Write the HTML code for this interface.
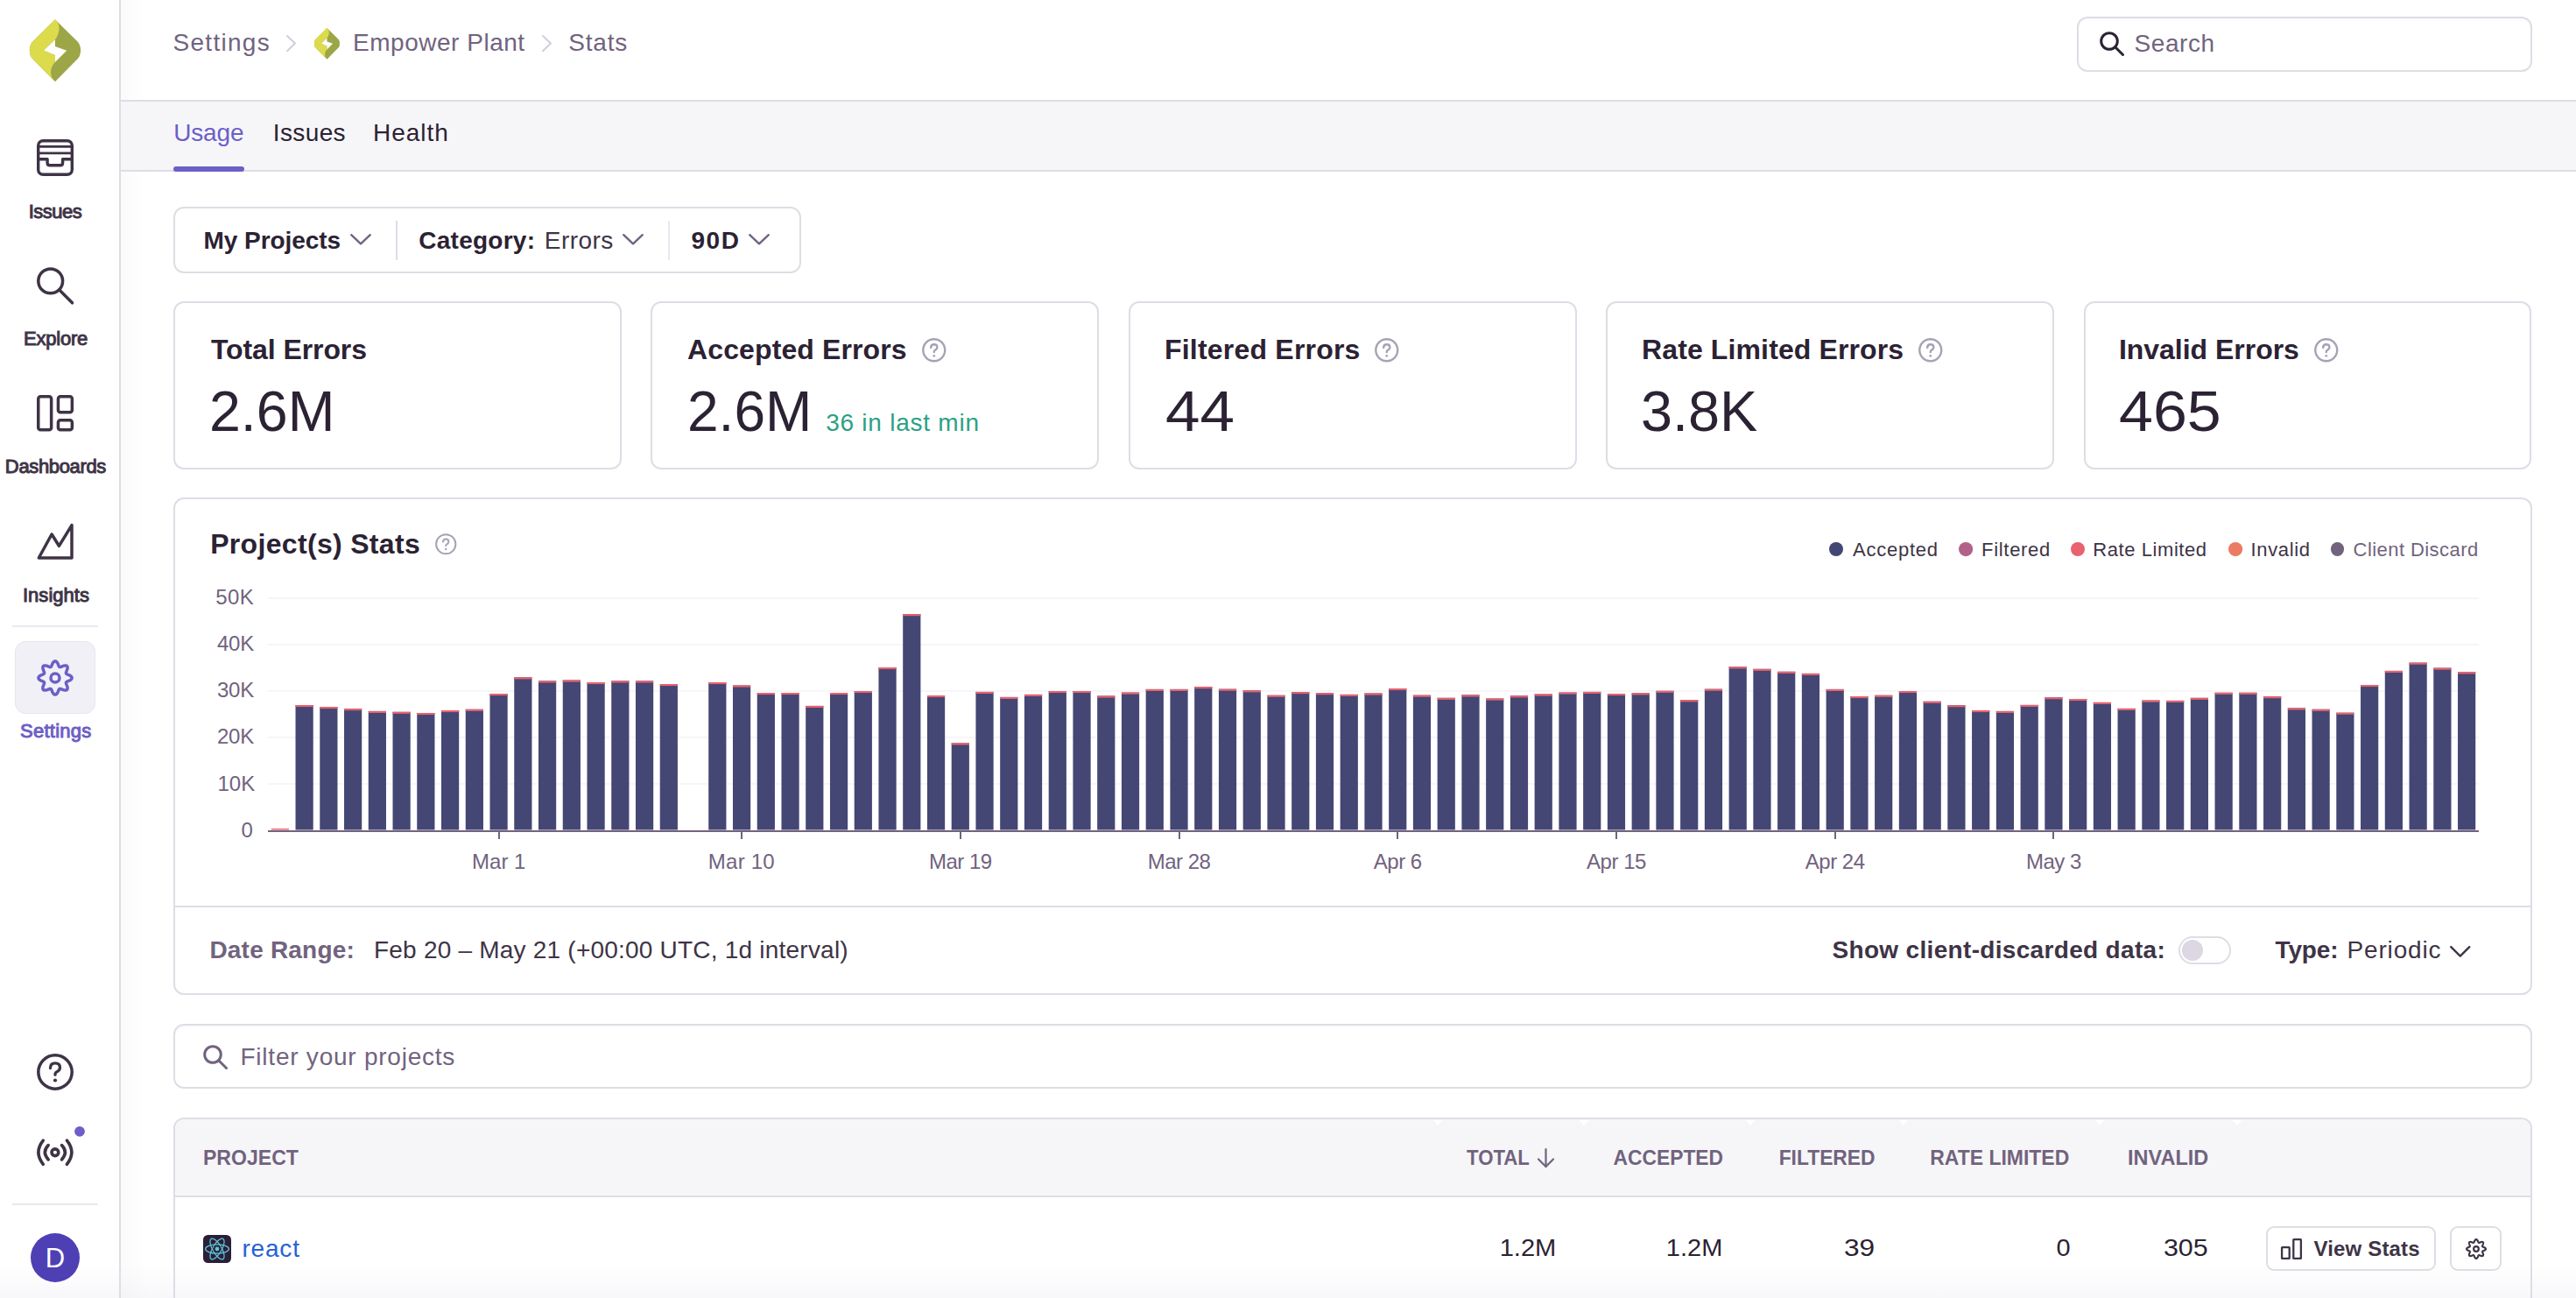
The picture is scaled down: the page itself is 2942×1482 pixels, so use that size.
<!DOCTYPE html><html><head><meta charset="utf-8"><style>
html,body{margin:0;padding:0;}
body{width:2942px;height:1482px;overflow:hidden;position:relative;background:#fff;font-family:"Liberation Sans", sans-serif;}
.t{position:absolute;white-space:nowrap;font-family:"Liberation Sans", sans-serif;}
svg{overflow:visible}
</style></head><body>
<div style="position:absolute;left:0.0px;top:1443.0px;width:2942.0px;height:39.0px;box-sizing:border-box;background:linear-gradient(to bottom, rgba(246,245,248,0), rgba(243,242,246,0.6))"></div>
<div style="position:absolute;left:136.0px;top:0.0px;width:2.0px;height:1482.0px;box-sizing:border-box;background:#e0dce5"></div>
<div style="position:absolute;left:138.0px;top:0.0px;width:32.0px;height:1482.0px;box-sizing:border-box;background:linear-gradient(to right, rgba(80,60,110,0.025), rgba(80,60,110,0))"></div>
<svg style="position:absolute;left:28.0px;top:16.0px;" width="70" height="84" viewBox="0 0 1082 1298" fill="none"><path d="M540,95 L140,490 Q90,545 90,640 Q90,735 140,790 L540,1195 L940,790 Q990,735 990,640 Q990,545 940,490 Z" fill="#9ca647"/>
<path d="M540,95 L140,490 Q90,545 90,640 Q90,735 140,790 L540,1195 C440,1110 440,950 540,850 L540,730 L340,640 L540,450 C635,330 635,170 540,95 Z" fill="#dcdb4c"/>
<path d="M540,450 L340,640 L540,725 L540,850 L745,645 L540,570 Z" fill="#fff"/></svg>
<svg style="position:absolute;left:42.0px;top:159.0px;" width="42" height="42" viewBox="0 0 42 42" fill="none"><g stroke="#3e3446" stroke-width="3.4" stroke-linecap="round" stroke-linejoin="round">
<rect x="1.7" y="1.7" width="38.6" height="38.6" rx="5.5"/>
<path d="M1.7,8.4 H40.3" stroke-width="2.6"/><path d="M1.7,15.9 H40.3" stroke-width="2.9"/>
<path d="M1.7,22.7 H12.1 V27 Q12.1,29.8 15,29.8 H26.8 Q29.6,29.8 29.6,27 V22.7 H40.3"/></g></svg>
<svg style="position:absolute;left:42.0px;top:305.0px;" width="42" height="42" viewBox="0 0 42 42" fill="none"><g stroke="#3e3446" stroke-width="3.5" stroke-linecap="round"><circle cx="15.7" cy="15.9" r="13.9"/><path d="M26.5,26.8 L40.5,40.8"/></g></svg>
<svg style="position:absolute;left:42.0px;top:451.0px;" width="42" height="42" viewBox="0 0 42 42" fill="none"><g stroke="#3e3446" stroke-width="3.5" stroke-linejoin="round">
<rect x="1.75" y="1.75" width="14.9" height="38" rx="2.5"/><rect x="24.45" y="1.75" width="15.9" height="18.1" rx="2.5"/><rect x="24.45" y="28.75" width="15.9" height="11" rx="2.5"/></g></svg>
<svg style="position:absolute;left:42.0px;top:597.0px;" width="42" height="42" viewBox="0 0 42 42" fill="none"><path d="M2.3,40 L17.1,13 L25.4,26.3 L40,2.6 L40,40 Z" stroke="#3e3446" stroke-width="3.5" stroke-linejoin="round" stroke-linecap="round"/></svg>
<div style="position:absolute;left:14.0px;top:714.0px;width:98.0px;height:2.0px;box-sizing:border-box;background:#ebe7ef"></div>
<div style="position:absolute;left:17.0px;top:732.0px;width:92.0px;height:83.0px;box-sizing:border-box;background:#f1f0f7;border:1.5px solid #e8e5ee;border-radius:12px"></div>
<svg style="position:absolute;left:42.0px;top:753.0px;" width="42" height="42" viewBox="0 0 42 42" fill="none"><g stroke="#6c5fc7" stroke-width="3.5" stroke-linejoin="round"><path d="M21.00,1.90 L21.74,2.05 L22.46,2.49 L23.11,3.18 L23.69,4.05 L24.18,5.01 L24.60,5.99 L24.98,6.90 L25.34,7.65 L25.72,8.21 L26.17,8.53 L26.71,8.62 L27.37,8.49 L28.16,8.21 L29.06,7.84 L30.06,7.45 L31.09,7.11 L32.11,6.91 L33.06,6.88 L33.87,7.08 L34.51,7.49 L34.92,8.13 L35.12,8.94 L35.09,9.89 L34.89,10.91 L34.55,11.94 L34.16,12.94 L33.79,13.84 L33.51,14.63 L33.38,15.29 L33.47,15.83 L33.79,16.28 L34.35,16.66 L35.10,17.02 L36.01,17.40 L36.99,17.82 L37.95,18.31 L38.82,18.89 L39.51,19.54 L39.95,20.26 L40.10,21.00 L39.95,21.74 L39.51,22.46 L38.82,23.11 L37.95,23.69 L36.99,24.18 L36.01,24.60 L35.10,24.98 L34.35,25.34 L33.79,25.72 L33.47,26.17 L33.38,26.71 L33.51,27.37 L33.79,28.16 L34.16,29.06 L34.55,30.06 L34.89,31.09 L35.09,32.11 L35.12,33.06 L34.92,33.87 L34.51,34.51 L33.87,34.92 L33.06,35.12 L32.11,35.09 L31.09,34.89 L30.06,34.55 L29.06,34.16 L28.16,33.79 L27.37,33.51 L26.71,33.38 L26.17,33.47 L25.72,33.79 L25.34,34.35 L24.98,35.10 L24.60,36.01 L24.18,36.99 L23.69,37.95 L23.11,38.82 L22.46,39.51 L21.74,39.95 L21.00,40.10 L20.26,39.95 L19.54,39.51 L18.89,38.82 L18.31,37.95 L17.82,36.99 L17.40,36.01 L17.02,35.10 L16.66,34.35 L16.28,33.79 L15.83,33.47 L15.29,33.38 L14.63,33.51 L13.84,33.79 L12.94,34.16 L11.94,34.55 L10.91,34.89 L9.89,35.09 L8.94,35.12 L8.13,34.92 L7.49,34.51 L7.08,33.87 L6.88,33.06 L6.91,32.11 L7.11,31.09 L7.45,30.06 L7.84,29.06 L8.21,28.16 L8.49,27.37 L8.62,26.71 L8.53,26.17 L8.21,25.72 L7.65,25.34 L6.90,24.98 L5.99,24.60 L5.01,24.18 L4.05,23.69 L3.18,23.11 L2.49,22.46 L2.05,21.74 L1.90,21.00 L2.05,20.26 L2.49,19.54 L3.18,18.89 L4.05,18.31 L5.01,17.82 L5.99,17.40 L6.90,17.02 L7.65,16.66 L8.21,16.28 L8.53,15.83 L8.62,15.29 L8.49,14.63 L8.21,13.84 L7.84,12.94 L7.45,11.94 L7.11,10.91 L6.91,9.89 L6.88,8.94 L7.08,8.13 L7.49,7.49 L8.13,7.08 L8.94,6.88 L9.89,6.91 L10.91,7.11 L11.94,7.45 L12.94,7.84 L13.84,8.21 L14.63,8.49 L15.29,8.62 L15.83,8.53 L16.28,8.21 L16.66,7.65 L17.02,6.90 L17.40,5.99 L17.82,5.01 L18.31,4.05 L18.89,3.18 L19.54,2.49 L20.26,2.05 Z"/><circle cx="21" cy="21" r="5"/></g></svg>
<div id="t1" class="t" style="left:63.00px;top:230.7px;font-size:22px;line-height:22px;font-weight:400;color:#3e3446;letter-spacing:-0.520px;transform:translateX(-50%) ;transform-origin:center center;-webkit-text-stroke:1px #3e3446;">Issues</div>
<div id="t2" class="t" style="left:63.60px;top:376.0px;font-size:22px;line-height:22px;font-weight:400;color:#3e3446;letter-spacing:-0.217px;transform:translateX(-50%) ;transform-origin:center center;-webkit-text-stroke:1px #3e3446;">Explore</div>
<div id="t3" class="t" style="left:63.40px;top:522.3px;font-size:22px;line-height:22px;font-weight:400;color:#3e3446;letter-spacing:-0.356px;transform:translateX(-50%) ;transform-origin:center center;-webkit-text-stroke:1px #3e3446;">Dashboards</div>
<div id="t4" class="t" style="left:64.00px;top:668.7px;font-size:22px;line-height:22px;font-weight:400;color:#3e3446;letter-spacing:0.029px;transform:translateX(-50%) ;transform-origin:center center;-webkit-text-stroke:1px #3e3446;">Insights</div>
<div id="t5" class="t" style="left:63.80px;top:824.2px;font-size:22px;line-height:22px;font-weight:400;color:#6c5fc7;letter-spacing:0.257px;transform:translateX(-50%) ;transform-origin:center center;-webkit-text-stroke:1px #6c5fc7;">Settings</div>
<svg style="position:absolute;left:42.0px;top:1203.0px;" width="42" height="42" viewBox="0 0 42 42" fill="none"><g stroke="#3e3446" stroke-width="3.5" stroke-linecap="round"><circle cx="21" cy="21" r="19.2"/>
<path d="M15.5,16.5 Q15.5,10.8 21,10.8 Q26.5,10.8 26.5,15.8 Q26.5,19.5 22.5,21 Q21,21.6 21,24.2" stroke-width="3.3" fill="none"/></g><circle cx="21" cy="30.5" r="2.1" fill="#3e3446"/></svg>
<svg style="position:absolute;left:36.0px;top:1280.0px;" width="64" height="64" viewBox="0 0 64 64" fill="none"><g stroke="#3e3446" stroke-width="3.6" stroke-linecap="round" fill="none">
<circle cx="26.9" cy="35.75" r="3.9"/>
<path d="M19.2,27.6 Q11.5,35.75 19.2,43.9"/><path d="M34.5,27.6 Q42.2,35.75 34.5,43.9"/>
<path d="M13.3,22.2 Q2.5,35.75 13.3,49.3"/><path d="M40.4,22.2 Q51.3,35.75 40.4,49.3"/></g>
<circle cx="55" cy="11.8" r="5.9" fill="#6c5fc7"/></svg>
<div style="position:absolute;left:14.0px;top:1374.0px;width:98.0px;height:2.0px;box-sizing:border-box;background:#ebe7ef"></div>
<div style="position:absolute;left:35.0px;top:1408.0px;width:56.0px;height:56.0px;box-sizing:border-box;background:#4e3fb4;border-radius:50%"></div>
<div id="t6" class="t" style="left:63.00px;top:1421.3px;font-size:31px;line-height:31px;font-weight:400;color:#fff;letter-spacing:0.000px;transform:translateX(-50%) ;transform-origin:center center;">D</div>
<div id="t7" class="t" style="left:197.50px;top:35.4px;font-size:28px;line-height:28px;font-weight:400;color:#71637e;letter-spacing:1.286px;">Settings</div>
<svg style="position:absolute;left:326.7px;top:40.4px;" width="11" height="19.2" viewBox="0 0 11 19.2" fill="none"><path d="M1,1 L10,9.6 L1,18.2" stroke="#d3cedb" stroke-width="2" stroke-linecap="round" stroke-linejoin="round"/></svg>
<svg style="position:absolute;left:356.4px;top:28.5px;" width="35" height="42" viewBox="0 0 1082 1298" fill="none"><path d="M540,95 L140,490 Q90,545 90,640 Q90,735 140,790 L540,1195 L940,790 Q990,735 990,640 Q990,545 940,490 Z" fill="#9ca647"/>
<path d="M540,95 L140,490 Q90,545 90,640 Q90,735 140,790 L540,1195 C440,1110 440,950 540,850 L540,730 L340,640 L540,450 C635,330 635,170 540,95 Z" fill="#dcdb4c"/>
<path d="M540,450 L340,640 L540,725 L540,850 L745,645 L540,570 Z" fill="#fff"/></svg>
<div id="t8" class="t" style="left:403.00px;top:35.4px;font-size:28px;line-height:28px;font-weight:400;color:#71637e;letter-spacing:0.523px;">Empower Plant</div>
<svg style="position:absolute;left:619.0px;top:40.4px;" width="11" height="19.2" viewBox="0 0 11 19.2" fill="none"><path d="M1,1 L10,9.6 L1,18.2" stroke="#d3cedb" stroke-width="2" stroke-linecap="round" stroke-linejoin="round"/></svg>
<div id="t9" class="t" style="left:649.20px;top:35.4px;font-size:28px;line-height:28px;font-weight:400;color:#71637e;letter-spacing:0.820px;">Stats</div>
<div style="position:absolute;left:2372.0px;top:19.0px;width:519.5px;height:62.5px;box-sizing:border-box;border:2px solid #e0dce5;border-radius:12px;box-shadow:inset 0 2px 2px rgba(0,0,0,0.02)"></div>
<svg style="position:absolute;left:2398.0px;top:36.0px;" width="28" height="28" viewBox="0 0 28 28" fill="none"><g stroke="#2b2233" stroke-width="3" stroke-linecap="round"><circle cx="11" cy="11" r="9.3"/><path d="M18,18 L26.5,26.5"/></g></svg>
<div id="t10" class="t" style="left:2437.60px;top:36.3px;font-size:28px;line-height:28px;font-weight:400;color:#71637e;letter-spacing:0.540px;">Search</div>
<div style="position:absolute;left:138.0px;top:114.0px;width:2804.0px;height:82.0px;box-sizing:border-box;background:#f6f6f9;border-top:2px solid #e0dce5;border-bottom:2px solid #e0dce5"></div>
<div id="t11" class="t" style="left:198.20px;top:137.7px;font-size:28px;line-height:28px;font-weight:400;color:#6c5fc7;letter-spacing:-0.150px;">Usage</div>
<div id="t12" class="t" style="left:311.80px;top:137.7px;font-size:28px;line-height:28px;font-weight:400;color:#2b2233;letter-spacing:0.380px;">Issues</div>
<div id="t13" class="t" style="left:426.00px;top:137.7px;font-size:28px;line-height:28px;font-weight:400;color:#2b2233;letter-spacing:1.000px;">Health</div>
<div style="position:absolute;left:198.0px;top:190.0px;width:81.0px;height:6.0px;box-sizing:border-box;background:#6c5fc7;border-radius:3px"></div>
<div style="position:absolute;left:198.0px;top:236.0px;width:717.0px;height:75.5px;box-sizing:border-box;border:2px solid #e0dce5;border-radius:12px"></div>
<div id="t14" class="t" style="left:232.60px;top:260.6px;font-size:28px;line-height:28px;font-weight:700;color:#2b2233;letter-spacing:-0.080px;">My Projects</div>
<svg style="position:absolute;left:400.4px;top:267.4px;" width="24" height="12.5" viewBox="0 0 24 12.5" fill="none"><path d="M1.2,1.2 L12.0,11.3 L22.8,1.2" stroke="#71637e" stroke-width="2.4" stroke-linecap="round" stroke-linejoin="round"/></svg>
<div style="position:absolute;left:452.0px;top:251.6px;width:2.0px;height:45.2px;box-sizing:border-box;background:#e0dce5"></div>
<div id="t15" class="t" style="left:478.25px;top:260.6px;font-size:28px;line-height:28px;font-weight:700;color:#2b2233;letter-spacing:0.253px;">Category:</div>
<div id="t16" class="t" style="left:621.80px;top:260.6px;font-size:28px;line-height:28px;font-weight:400;color:#3e3446;letter-spacing:0.460px;">Errors</div>
<svg style="position:absolute;left:711.0px;top:267.4px;" width="24" height="12.5" viewBox="0 0 24 12.5" fill="none"><path d="M1.2,1.2 L12.0,11.3 L22.8,1.2" stroke="#71637e" stroke-width="2.4" stroke-linecap="round" stroke-linejoin="round"/></svg>
<div style="position:absolute;left:763.0px;top:251.6px;width:2.0px;height:45.2px;box-sizing:border-box;background:#ebe7ef"></div>
<div id="t17" class="t" style="left:789.50px;top:260.6px;font-size:28px;line-height:28px;font-weight:700;color:#2b2233;letter-spacing:1.500px;">90D</div>
<svg style="position:absolute;left:854.6px;top:267.4px;" width="24" height="12.5" viewBox="0 0 24 12.5" fill="none"><path d="M1.2,1.2 L12.0,11.3 L22.8,1.2" stroke="#71637e" stroke-width="2.4" stroke-linecap="round" stroke-linejoin="round"/></svg>
<div style="position:absolute;left:198.0px;top:344.0px;width:511.9px;height:192.0px;box-sizing:border-box;border:2px solid #e0dce5;border-radius:12px"></div>
<div id="t18" class="t" style="left:241.00px;top:383.3px;font-size:32px;line-height:32px;font-weight:700;color:#2b2233;letter-spacing:-0.089px;">Total Errors</div>
<div id="t19" class="t" style="left:238.50px;top:438.4px;font-size:64px;line-height:64px;font-weight:400;color:#2b2233;letter-spacing:0.000px;transform:scaleX(1.0074);transform-origin:left center;">2.6M</div>
<div style="position:absolute;left:743.4px;top:344.0px;width:511.9px;height:192.0px;box-sizing:border-box;border:2px solid #e0dce5;border-radius:12px"></div>
<div id="t20" class="t" style="left:785.00px;top:383.3px;font-size:32px;line-height:32px;font-weight:700;color:#2b2233;letter-spacing:0.117px;">Accepted Errors</div>
<div id="t21" class="t" style="left:784.70px;top:438.4px;font-size:64px;line-height:64px;font-weight:400;color:#2b2233;letter-spacing:0.000px;transform:scaleX(1.0001);transform-origin:left center;">2.6M</div>
<svg style="position:absolute;left:1053.2px;top:386.1px;" width="27.5" height="27.5" viewBox="0 0 26 26" fill="none"><circle cx="13" cy="13" r="11.8" stroke="#a7a2b5" stroke-width="2.27"/>
<path d="M9.6,10.3 Q9.6,6.8 13,6.8 Q16.4,6.8 16.4,9.8 Q16.4,12.1 14,13.1 Q13,13.5 13,15.2" stroke="#a7a2b5" stroke-width="2.27" stroke-linecap="round"/><circle cx="13" cy="19.2" r="1.3" fill="#a7a2b5"/></svg>
<div style="position:absolute;left:1288.8px;top:344.0px;width:511.9px;height:192.0px;box-sizing:border-box;border:2px solid #e0dce5;border-radius:12px"></div>
<div id="t22" class="t" style="left:1330.00px;top:383.3px;font-size:32px;line-height:32px;font-weight:700;color:#2b2233;letter-spacing:0.207px;">Filtered Errors</div>
<div id="t23" class="t" style="left:1330.90px;top:438.4px;font-size:64px;line-height:64px;font-weight:400;color:#2b2233;letter-spacing:0.000px;transform:scaleX(1.1090);transform-origin:left center;">44</div>
<svg style="position:absolute;left:1570.2px;top:386.1px;" width="27.5" height="27.5" viewBox="0 0 26 26" fill="none"><circle cx="13" cy="13" r="11.8" stroke="#a7a2b5" stroke-width="2.27"/>
<path d="M9.6,10.3 Q9.6,6.8 13,6.8 Q16.4,6.8 16.4,9.8 Q16.4,12.1 14,13.1 Q13,13.5 13,15.2" stroke="#a7a2b5" stroke-width="2.27" stroke-linecap="round"/><circle cx="13" cy="19.2" r="1.3" fill="#a7a2b5"/></svg>
<div style="position:absolute;left:1834.2px;top:344.0px;width:511.9px;height:192.0px;box-sizing:border-box;border:2px solid #e0dce5;border-radius:12px"></div>
<div id="t24" class="t" style="left:1875.00px;top:383.3px;font-size:32px;line-height:32px;font-weight:700;color:#2b2233;letter-spacing:0.122px;">Rate Limited Errors</div>
<div id="t25" class="t" style="left:1874.30px;top:438.4px;font-size:64px;line-height:64px;font-weight:400;color:#2b2233;letter-spacing:0.000px;transform:scaleX(1.0124);transform-origin:left center;">3.8K</div>
<svg style="position:absolute;left:2191.3px;top:386.1px;" width="27.5" height="27.5" viewBox="0 0 26 26" fill="none"><circle cx="13" cy="13" r="11.8" stroke="#a7a2b5" stroke-width="2.27"/>
<path d="M9.6,10.3 Q9.6,6.8 13,6.8 Q16.4,6.8 16.4,9.8 Q16.4,12.1 14,13.1 Q13,13.5 13,15.2" stroke="#a7a2b5" stroke-width="2.27" stroke-linecap="round"/><circle cx="13" cy="19.2" r="1.3" fill="#a7a2b5"/></svg>
<div style="position:absolute;left:2379.6px;top:344.0px;width:511.9px;height:192.0px;box-sizing:border-box;border:2px solid #e0dce5;border-radius:12px"></div>
<div id="t26" class="t" style="left:2419.90px;top:383.3px;font-size:32px;line-height:32px;font-weight:700;color:#2b2233;letter-spacing:-0.023px;">Invalid Errors</div>
<div id="t27" class="t" style="left:2420.40px;top:438.4px;font-size:64px;line-height:64px;font-weight:400;color:#2b2233;letter-spacing:0.000px;transform:scaleX(1.0932);transform-origin:left center;">465</div>
<svg style="position:absolute;left:2642.8px;top:386.1px;" width="27.5" height="27.5" viewBox="0 0 26 26" fill="none"><circle cx="13" cy="13" r="11.8" stroke="#a7a2b5" stroke-width="2.27"/>
<path d="M9.6,10.3 Q9.6,6.8 13,6.8 Q16.4,6.8 16.4,9.8 Q16.4,12.1 14,13.1 Q13,13.5 13,15.2" stroke="#a7a2b5" stroke-width="2.27" stroke-linecap="round"/><circle cx="13" cy="19.2" r="1.3" fill="#a7a2b5"/></svg>
<div id="t28" class="t" style="left:943.20px;top:468.9px;font-size:28px;line-height:28px;font-weight:400;color:#2ba185;letter-spacing:0.754px;">36 in last min</div>
<div style="position:absolute;left:198.0px;top:568.0px;width:2693.5px;height:567.5px;box-sizing:border-box;border:2px solid #e0dce5;border-radius:12px"></div>
<div style="position:absolute;left:200.0px;top:1034.0px;width:2689.5px;height:2.0px;box-sizing:border-box;background:#e0dce5"></div>
<div id="t29" class="t" style="left:240.20px;top:604.5px;font-size:32px;line-height:32px;font-weight:700;color:#2b2233;letter-spacing:0.320px;">Project(s) Stats</div>
<svg style="position:absolute;left:496.8px;top:608.8px;" width="24.5" height="24.5" viewBox="0 0 26 26" fill="none"><circle cx="13" cy="13" r="11.8" stroke="#a7a2b5" stroke-width="2.12"/>
<path d="M9.6,10.3 Q9.6,6.8 13,6.8 Q16.4,6.8 16.4,9.8 Q16.4,12.1 14,13.1 Q13,13.5 13,15.2" stroke="#a7a2b5" stroke-width="2.12" stroke-linecap="round"/><circle cx="13" cy="19.2" r="1.3" fill="#a7a2b5"/></svg>
<div style="position:absolute;left:2089.1px;top:619.1px;width:15.8px;height:15.8px;box-sizing:border-box;background:#444674;border-radius:50%"></div>
<div id="t30" class="t" style="left:2116.10px;top:617.0px;font-size:22px;line-height:22px;font-weight:400;color:#3e3446;letter-spacing:0.750px;">Accepted</div>
<svg style="position:absolute;left:2236.9px;top:618.9px;" width="16.2" height="16.2" viewBox="0 0 16.2 16.2" fill="none"><defs><pattern id="pFiltered" width="2" height="2" patternUnits="userSpaceOnUse"><rect width="2" height="2" fill="#d66b8f"/><rect x="0.5" y="0.5" width="1" height="1" fill="#444674"/></pattern></defs><circle cx="8.1" cy="8.1" r="8.1" fill="url(#pFiltered)"/></svg>
<div id="t31" class="t" style="left:2263.00px;top:617.0px;font-size:22px;line-height:22px;font-weight:400;color:#3e3446;letter-spacing:0.700px;">Filtered</div>
<div style="position:absolute;left:2364.9px;top:619.1px;width:15.8px;height:15.8px;box-sizing:border-box;background:#e9626e;border-radius:50%"></div>
<div id="t32" class="t" style="left:2390.30px;top:617.0px;font-size:22px;line-height:22px;font-weight:400;color:#3e3446;letter-spacing:0.573px;">Rate Limited</div>
<svg style="position:absolute;left:2544.8px;top:618.9px;" width="16.2" height="16.2" viewBox="0 0 16.2 16.2" fill="none"><defs><pattern id="pInvalid" width="2" height="2" patternUnits="userSpaceOnUse"><rect width="2" height="2" fill="#ec5b6b"/><rect x="0.5" y="0.5" width="1" height="1" fill="#e3df4c"/></pattern></defs><circle cx="8.1" cy="8.1" r="8.1" fill="url(#pInvalid)"/></svg>
<div id="t33" class="t" style="left:2570.50px;top:617.0px;font-size:22px;line-height:22px;font-weight:400;color:#3e3446;letter-spacing:0.667px;">Invalid</div>
<div style="position:absolute;left:2661.5px;top:619.1px;width:15.8px;height:15.8px;box-sizing:border-box;background:#71637e;border-radius:50%"></div>
<div id="t34" class="t" style="left:2687.60px;top:617.0px;font-size:22px;line-height:22px;font-weight:400;color:#71637e;letter-spacing:0.432px;">Client Discard</div>
<div id="t35" class="t" style="right:2652.20px;top:935.7px;font-size:24px;line-height:24px;font-weight:400;color:#71637e;letter-spacing:1.000px;">0</div>
<div style="position:absolute;left:306.0px;top:894.4px;width:2525.0px;height:2.0px;box-sizing:border-box;background:#f6f5f8"></div>
<div id="t36" class="t" style="right:2650.60px;top:882.5px;font-size:24px;line-height:24px;font-weight:400;color:#71637e;letter-spacing:0.100px;">10K</div>
<div style="position:absolute;left:306.0px;top:841.3px;width:2525.0px;height:2.0px;box-sizing:border-box;background:#f6f5f8"></div>
<div id="t37" class="t" style="right:2652.00px;top:829.1px;font-size:24px;line-height:24px;font-weight:400;color:#71637e;letter-spacing:-0.200px;">20K</div>
<div style="position:absolute;left:306.0px;top:788.1px;width:2525.0px;height:2.0px;box-sizing:border-box;background:#f6f5f8"></div>
<div id="t38" class="t" style="right:2652.00px;top:775.9px;font-size:24px;line-height:24px;font-weight:400;color:#71637e;letter-spacing:-0.200px;">30K</div>
<div style="position:absolute;left:306.0px;top:735.0px;width:2525.0px;height:2.0px;box-sizing:border-box;background:#f6f5f8"></div>
<div id="t39" class="t" style="right:2652.00px;top:722.6px;font-size:24px;line-height:24px;font-weight:400;color:#71637e;letter-spacing:-0.200px;">40K</div>
<div style="position:absolute;left:306.0px;top:681.9px;width:2525.0px;height:2.0px;box-sizing:border-box;background:#f6f5f8"></div>
<div id="t40" class="t" style="right:2651.80px;top:669.6px;font-size:24px;line-height:24px;font-weight:400;color:#71637e;letter-spacing:0.400px;">50K</div>
<svg style="position:absolute;left:0;top:0" width="2942" height="1482" viewBox="0 0 2942 1482"><rect x="309.77" y="946.00" width="20.2" height="1.50" fill="#e9626e"/><rect x="337.52" y="805.00" width="20.2" height="142.50" fill="#444674"/><rect x="337.52" y="805.00" width="20.2" height="2.1" fill="#e9626e"/><rect x="365.27" y="807.00" width="20.2" height="140.50" fill="#444674"/><rect x="365.27" y="807.00" width="20.2" height="2.1" fill="#e9626e"/><rect x="393.02" y="809.10" width="20.2" height="138.40" fill="#444674"/><rect x="393.02" y="809.10" width="20.2" height="2.1" fill="#e9626e"/><rect x="420.76" y="811.90" width="20.2" height="135.60" fill="#444674"/><rect x="420.76" y="811.90" width="20.2" height="2.1" fill="#e9626e"/><rect x="448.51" y="812.80" width="20.2" height="134.70" fill="#444674"/><rect x="448.51" y="812.80" width="20.2" height="2.1" fill="#e9626e"/><rect x="476.26" y="814.00" width="20.2" height="133.50" fill="#444674"/><rect x="476.26" y="814.00" width="20.2" height="2.1" fill="#e9626e"/><rect x="504.00" y="811.00" width="20.2" height="136.50" fill="#444674"/><rect x="504.00" y="811.00" width="20.2" height="2.1" fill="#e9626e"/><rect x="531.75" y="809.80" width="20.2" height="137.70" fill="#444674"/><rect x="531.75" y="809.80" width="20.2" height="2.1" fill="#e9626e"/><rect x="559.50" y="792.00" width="20.2" height="155.50" fill="#444674"/><rect x="559.50" y="792.00" width="20.2" height="2.1" fill="#e9626e"/><rect x="587.25" y="773.30" width="20.2" height="174.20" fill="#444674"/><rect x="587.25" y="773.30" width="20.2" height="2.1" fill="#e9626e"/><rect x="614.99" y="777.40" width="20.2" height="170.10" fill="#444674"/><rect x="614.99" y="777.40" width="20.2" height="2.1" fill="#e9626e"/><rect x="642.74" y="776.50" width="20.2" height="171.00" fill="#444674"/><rect x="642.74" y="776.50" width="20.2" height="2.1" fill="#e9626e"/><rect x="670.49" y="779.00" width="20.2" height="168.50" fill="#444674"/><rect x="670.49" y="779.00" width="20.2" height="2.1" fill="#e9626e"/><rect x="698.24" y="777.40" width="20.2" height="170.10" fill="#444674"/><rect x="698.24" y="777.40" width="20.2" height="2.1" fill="#e9626e"/><rect x="725.98" y="777.40" width="20.2" height="170.10" fill="#444674"/><rect x="725.98" y="777.40" width="20.2" height="2.1" fill="#e9626e"/><rect x="753.73" y="781.00" width="20.2" height="166.50" fill="#444674"/><rect x="753.73" y="781.00" width="20.2" height="2.1" fill="#e9626e"/><rect x="809.22" y="779.00" width="20.2" height="168.50" fill="#444674"/><rect x="809.22" y="779.00" width="20.2" height="2.1" fill="#e9626e"/><rect x="836.97" y="782.50" width="20.2" height="165.00" fill="#444674"/><rect x="836.97" y="782.50" width="20.2" height="2.1" fill="#e9626e"/><rect x="864.72" y="791.00" width="20.2" height="156.50" fill="#444674"/><rect x="864.72" y="791.00" width="20.2" height="2.1" fill="#e9626e"/><rect x="892.47" y="791.00" width="20.2" height="156.50" fill="#444674"/><rect x="892.47" y="791.00" width="20.2" height="2.1" fill="#e9626e"/><rect x="920.21" y="805.90" width="20.2" height="141.60" fill="#444674"/><rect x="920.21" y="805.90" width="20.2" height="2.1" fill="#e9626e"/><rect x="947.96" y="791.00" width="20.2" height="156.50" fill="#444674"/><rect x="947.96" y="791.00" width="20.2" height="2.1" fill="#e9626e"/><rect x="975.71" y="789.00" width="20.2" height="158.50" fill="#444674"/><rect x="975.71" y="789.00" width="20.2" height="2.1" fill="#e9626e"/><rect x="1003.45" y="762.00" width="20.2" height="185.50" fill="#444674"/><rect x="1003.45" y="762.00" width="20.2" height="2.1" fill="#e9626e"/><rect x="1031.20" y="701.10" width="20.2" height="246.40" fill="#444674"/><rect x="1031.20" y="701.10" width="20.2" height="2.1" fill="#e9626e"/><rect x="1058.95" y="794.00" width="20.2" height="153.50" fill="#444674"/><rect x="1058.95" y="794.00" width="20.2" height="2.1" fill="#e9626e"/><rect x="1086.70" y="848.40" width="20.2" height="99.10" fill="#444674"/><rect x="1086.70" y="848.40" width="20.2" height="2.1" fill="#e9626e"/><rect x="1114.44" y="789.90" width="20.2" height="157.60" fill="#444674"/><rect x="1114.44" y="789.90" width="20.2" height="2.1" fill="#e9626e"/><rect x="1142.19" y="795.90" width="20.2" height="151.60" fill="#444674"/><rect x="1142.19" y="795.90" width="20.2" height="2.1" fill="#e9626e"/><rect x="1169.94" y="792.90" width="20.2" height="154.60" fill="#444674"/><rect x="1169.94" y="792.90" width="20.2" height="2.1" fill="#e9626e"/><rect x="1197.69" y="789.00" width="20.2" height="158.50" fill="#444674"/><rect x="1197.69" y="789.00" width="20.2" height="2.1" fill="#e9626e"/><rect x="1225.43" y="789.00" width="20.2" height="158.50" fill="#444674"/><rect x="1225.43" y="789.00" width="20.2" height="2.1" fill="#e9626e"/><rect x="1253.18" y="794.50" width="20.2" height="153.00" fill="#444674"/><rect x="1253.18" y="794.50" width="20.2" height="2.1" fill="#e9626e"/><rect x="1280.93" y="790.60" width="20.2" height="156.90" fill="#444674"/><rect x="1280.93" y="790.60" width="20.2" height="2.1" fill="#e9626e"/><rect x="1308.67" y="786.90" width="20.2" height="160.60" fill="#444674"/><rect x="1308.67" y="786.90" width="20.2" height="2.1" fill="#e9626e"/><rect x="1336.42" y="786.90" width="20.2" height="160.60" fill="#444674"/><rect x="1336.42" y="786.90" width="20.2" height="2.1" fill="#e9626e"/><rect x="1364.17" y="784.10" width="20.2" height="163.40" fill="#444674"/><rect x="1364.17" y="784.10" width="20.2" height="2.1" fill="#e9626e"/><rect x="1391.92" y="786.70" width="20.2" height="160.80" fill="#444674"/><rect x="1391.92" y="786.70" width="20.2" height="2.1" fill="#e9626e"/><rect x="1419.66" y="788.30" width="20.2" height="159.20" fill="#444674"/><rect x="1419.66" y="788.30" width="20.2" height="2.1" fill="#e9626e"/><rect x="1447.41" y="793.80" width="20.2" height="153.70" fill="#444674"/><rect x="1447.41" y="793.80" width="20.2" height="2.1" fill="#e9626e"/><rect x="1475.16" y="790.10" width="20.2" height="157.40" fill="#444674"/><rect x="1475.16" y="790.10" width="20.2" height="2.1" fill="#e9626e"/><rect x="1502.91" y="791.10" width="20.2" height="156.40" fill="#444674"/><rect x="1502.91" y="791.10" width="20.2" height="2.1" fill="#e9626e"/><rect x="1530.65" y="792.90" width="20.2" height="154.60" fill="#444674"/><rect x="1530.65" y="792.90" width="20.2" height="2.1" fill="#e9626e"/><rect x="1558.40" y="791.50" width="20.2" height="156.00" fill="#444674"/><rect x="1558.40" y="791.50" width="20.2" height="2.1" fill="#e9626e"/><rect x="1586.15" y="786.00" width="20.2" height="161.50" fill="#444674"/><rect x="1586.15" y="786.00" width="20.2" height="2.1" fill="#e9626e"/><rect x="1613.89" y="793.70" width="20.2" height="153.80" fill="#444674"/><rect x="1613.89" y="793.70" width="20.2" height="2.1" fill="#e9626e"/><rect x="1641.64" y="796.80" width="20.2" height="150.70" fill="#444674"/><rect x="1641.64" y="796.80" width="20.2" height="2.1" fill="#e9626e"/><rect x="1669.39" y="793.40" width="20.2" height="154.10" fill="#444674"/><rect x="1669.39" y="793.40" width="20.2" height="2.1" fill="#e9626e"/><rect x="1697.14" y="797.50" width="20.2" height="150.00" fill="#444674"/><rect x="1697.14" y="797.50" width="20.2" height="2.1" fill="#e9626e"/><rect x="1724.88" y="794.30" width="20.2" height="153.20" fill="#444674"/><rect x="1724.88" y="794.30" width="20.2" height="2.1" fill="#e9626e"/><rect x="1752.63" y="792.50" width="20.2" height="155.00" fill="#444674"/><rect x="1752.63" y="792.50" width="20.2" height="2.1" fill="#e9626e"/><rect x="1780.38" y="790.60" width="20.2" height="156.90" fill="#444674"/><rect x="1780.38" y="790.60" width="20.2" height="2.1" fill="#e9626e"/><rect x="1808.13" y="789.90" width="20.2" height="157.60" fill="#444674"/><rect x="1808.13" y="789.90" width="20.2" height="2.1" fill="#e9626e"/><rect x="1835.87" y="792.00" width="20.2" height="155.50" fill="#444674"/><rect x="1835.87" y="792.00" width="20.2" height="2.1" fill="#e9626e"/><rect x="1863.62" y="791.30" width="20.2" height="156.20" fill="#444674"/><rect x="1863.62" y="791.30" width="20.2" height="2.1" fill="#e9626e"/><rect x="1891.37" y="788.80" width="20.2" height="158.70" fill="#444674"/><rect x="1891.37" y="788.80" width="20.2" height="2.1" fill="#e9626e"/><rect x="1919.11" y="799.20" width="20.2" height="148.30" fill="#444674"/><rect x="1919.11" y="799.20" width="20.2" height="2.1" fill="#e9626e"/><rect x="1946.86" y="786.70" width="20.2" height="160.80" fill="#444674"/><rect x="1946.86" y="786.70" width="20.2" height="2.1" fill="#e9626e"/><rect x="1974.61" y="761.30" width="20.2" height="186.20" fill="#444674"/><rect x="1974.61" y="761.30" width="20.2" height="2.1" fill="#e9626e"/><rect x="2002.36" y="763.80" width="20.2" height="183.70" fill="#444674"/><rect x="2002.36" y="763.80" width="20.2" height="2.1" fill="#e9626e"/><rect x="2030.10" y="766.80" width="20.2" height="180.70" fill="#444674"/><rect x="2030.10" y="766.80" width="20.2" height="2.1" fill="#e9626e"/><rect x="2057.85" y="768.90" width="20.2" height="178.60" fill="#444674"/><rect x="2057.85" y="768.90" width="20.2" height="2.1" fill="#e9626e"/><rect x="2085.60" y="786.90" width="20.2" height="160.60" fill="#444674"/><rect x="2085.60" y="786.90" width="20.2" height="2.1" fill="#e9626e"/><rect x="2113.35" y="795.00" width="20.2" height="152.50" fill="#444674"/><rect x="2113.35" y="795.00" width="20.2" height="2.1" fill="#e9626e"/><rect x="2141.09" y="793.80" width="20.2" height="153.70" fill="#444674"/><rect x="2141.09" y="793.80" width="20.2" height="2.1" fill="#e9626e"/><rect x="2168.84" y="789.00" width="20.2" height="158.50" fill="#444674"/><rect x="2168.84" y="789.00" width="20.2" height="2.1" fill="#e9626e"/><rect x="2196.59" y="800.80" width="20.2" height="146.70" fill="#444674"/><rect x="2196.59" y="800.80" width="20.2" height="2.1" fill="#e9626e"/><rect x="2224.33" y="805.20" width="20.2" height="142.30" fill="#444674"/><rect x="2224.33" y="805.20" width="20.2" height="2.1" fill="#e9626e"/><rect x="2252.08" y="811.00" width="20.2" height="136.50" fill="#444674"/><rect x="2252.08" y="811.00" width="20.2" height="2.1" fill="#e9626e"/><rect x="2279.83" y="811.90" width="20.2" height="135.60" fill="#444674"/><rect x="2279.83" y="811.90" width="20.2" height="2.1" fill="#e9626e"/><rect x="2307.58" y="804.90" width="20.2" height="142.60" fill="#444674"/><rect x="2307.58" y="804.90" width="20.2" height="2.1" fill="#e9626e"/><rect x="2335.32" y="796.20" width="20.2" height="151.30" fill="#444674"/><rect x="2335.32" y="796.20" width="20.2" height="2.1" fill="#e9626e"/><rect x="2363.07" y="798.00" width="20.2" height="149.50" fill="#444674"/><rect x="2363.07" y="798.00" width="20.2" height="2.1" fill="#e9626e"/><rect x="2390.82" y="801.90" width="20.2" height="145.60" fill="#444674"/><rect x="2390.82" y="801.90" width="20.2" height="2.1" fill="#e9626e"/><rect x="2418.56" y="808.90" width="20.2" height="138.60" fill="#444674"/><rect x="2418.56" y="808.90" width="20.2" height="2.1" fill="#e9626e"/><rect x="2446.31" y="799.60" width="20.2" height="147.90" fill="#444674"/><rect x="2446.31" y="799.60" width="20.2" height="2.1" fill="#e9626e"/><rect x="2474.06" y="799.90" width="20.2" height="147.60" fill="#444674"/><rect x="2474.06" y="799.90" width="20.2" height="2.1" fill="#e9626e"/><rect x="2501.81" y="796.80" width="20.2" height="150.70" fill="#444674"/><rect x="2501.81" y="796.80" width="20.2" height="2.1" fill="#e9626e"/><rect x="2529.55" y="790.80" width="20.2" height="156.70" fill="#444674"/><rect x="2529.55" y="790.80" width="20.2" height="2.1" fill="#e9626e"/><rect x="2557.30" y="790.80" width="20.2" height="156.70" fill="#444674"/><rect x="2557.30" y="790.80" width="20.2" height="2.1" fill="#e9626e"/><rect x="2585.05" y="795.20" width="20.2" height="152.30" fill="#444674"/><rect x="2585.05" y="795.20" width="20.2" height="2.1" fill="#e9626e"/><rect x="2612.80" y="808.40" width="20.2" height="139.10" fill="#444674"/><rect x="2612.80" y="808.40" width="20.2" height="2.1" fill="#e9626e"/><rect x="2640.54" y="809.80" width="20.2" height="137.70" fill="#444674"/><rect x="2640.54" y="809.80" width="20.2" height="2.1" fill="#e9626e"/><rect x="2668.29" y="813.70" width="20.2" height="133.80" fill="#444674"/><rect x="2668.29" y="813.70" width="20.2" height="2.1" fill="#e9626e"/><rect x="2696.04" y="782.00" width="20.2" height="165.50" fill="#444674"/><rect x="2696.04" y="782.00" width="20.2" height="2.1" fill="#e9626e"/><rect x="2723.78" y="765.90" width="20.2" height="181.60" fill="#444674"/><rect x="2723.78" y="765.90" width="20.2" height="2.1" fill="#e9626e"/><rect x="2751.53" y="756.60" width="20.2" height="190.90" fill="#444674"/><rect x="2751.53" y="756.60" width="20.2" height="2.1" fill="#e9626e"/><rect x="2779.28" y="762.60" width="20.2" height="184.90" fill="#444674"/><rect x="2779.28" y="762.60" width="20.2" height="2.1" fill="#e9626e"/><rect x="2807.03" y="767.30" width="20.2" height="180.20" fill="#444674"/><rect x="2807.03" y="767.30" width="20.2" height="2.1" fill="#e9626e"/></svg>
<div style="position:absolute;left:306.0px;top:947.5px;width:2525.0px;height:2.0px;box-sizing:border-box;background:#71637e"></div>
<div style="position:absolute;left:568.6px;top:949.5px;width:2.0px;height:8.2px;box-sizing:border-box;background:#71637e"></div>
<div id="t41" class="t" style="left:569.80px;top:972.1px;font-size:24px;line-height:24px;font-weight:400;color:#71637e;letter-spacing:0.000px;transform:translateX(-50%) ;transform-origin:center center;">Mar 1</div>
<div style="position:absolute;left:846.1px;top:949.5px;width:2.0px;height:8.2px;box-sizing:border-box;background:#71637e"></div>
<div id="t42" class="t" style="left:846.87px;top:972.1px;font-size:24px;line-height:24px;font-weight:400;color:#71637e;letter-spacing:0.220px;transform:translateX(-50%) ;transform-origin:center center;">Mar 10</div>
<div style="position:absolute;left:1095.8px;top:949.5px;width:2.0px;height:8.2px;box-sizing:border-box;background:#71637e"></div>
<div id="t43" class="t" style="left:1096.80px;top:972.1px;font-size:24px;line-height:24px;font-weight:400;color:#71637e;letter-spacing:-0.500px;transform:translateX(-50%) ;transform-origin:center center;">Mar 19</div>
<div style="position:absolute;left:1345.5px;top:949.5px;width:2.0px;height:8.2px;box-sizing:border-box;background:#71637e"></div>
<div id="t44" class="t" style="left:1346.52px;top:972.1px;font-size:24px;line-height:24px;font-weight:400;color:#71637e;letter-spacing:-0.500px;transform:translateX(-50%) ;transform-origin:center center;">Mar 28</div>
<div style="position:absolute;left:1595.2px;top:949.5px;width:2.0px;height:8.2px;box-sizing:border-box;background:#71637e"></div>
<div id="t45" class="t" style="left:1596.25px;top:972.1px;font-size:24px;line-height:24px;font-weight:400;color:#71637e;letter-spacing:-0.500px;transform:translateX(-50%) ;transform-origin:center center;">Apr 6</div>
<div style="position:absolute;left:1845.0px;top:949.5px;width:2.0px;height:8.2px;box-sizing:border-box;background:#71637e"></div>
<div id="t46" class="t" style="left:1845.97px;top:972.1px;font-size:24px;line-height:24px;font-weight:400;color:#71637e;letter-spacing:-0.500px;transform:translateX(-50%) ;transform-origin:center center;">Apr 15</div>
<div style="position:absolute;left:2094.7px;top:949.5px;width:2.0px;height:8.2px;box-sizing:border-box;background:#71637e"></div>
<div id="t47" class="t" style="left:2095.70px;top:972.1px;font-size:24px;line-height:24px;font-weight:400;color:#71637e;letter-spacing:-0.500px;transform:translateX(-50%) ;transform-origin:center center;">Apr 24</div>
<div style="position:absolute;left:2344.4px;top:949.5px;width:2.0px;height:8.2px;box-sizing:border-box;background:#71637e"></div>
<div id="t48" class="t" style="left:2345.42px;top:972.1px;font-size:24px;line-height:24px;font-weight:400;color:#71637e;letter-spacing:-0.500px;transform:translateX(-50%) ;transform-origin:center center;">May 3</div>
<div id="t49" class="t" style="left:239.40px;top:1071.3px;font-size:28px;line-height:28px;font-weight:700;color:#71637e;letter-spacing:0.210px;">Date Range:</div>
<div id="t50" class="t" style="left:427.00px;top:1071.3px;font-size:28px;line-height:28px;font-weight:400;color:#3e3446;letter-spacing:0.215px;">Feb 20 – May 21 (+00:00 UTC, 1d interval)</div>
<div id="t51" class="t" style="left:2092.50px;top:1070.7px;font-size:28px;line-height:28px;font-weight:700;color:#3e3446;letter-spacing:0.325px;">Show client-discarded data:</div>
<div style="position:absolute;left:2488.0px;top:1069.0px;width:60.0px;height:32.0px;box-sizing:border-box;border:2px solid #e0dce5;border-radius:16px;background:#fff"></div>
<div style="position:absolute;left:2492.0px;top:1073.0px;width:24.0px;height:24.0px;box-sizing:border-box;background:#dcd7e2;border-radius:50%"></div>
<div id="t52" class="t" style="left:2598.50px;top:1070.7px;font-size:28px;line-height:28px;font-weight:700;color:#3e3446;letter-spacing:-0.150px;">Type:</div>
<div id="t53" class="t" style="left:2680.50px;top:1070.7px;font-size:28px;line-height:28px;font-weight:400;color:#3e3446;letter-spacing:0.836px;">Periodic</div>
<svg style="position:absolute;left:2798.0px;top:1079.5px;" width="23.5" height="12.8" viewBox="0 0 23.5 12.8" fill="none"><path d="M1.2,1.2 L11.75,11.600000000000001 L22.3,1.2" stroke="#3e3446" stroke-width="2.4" stroke-linecap="round" stroke-linejoin="round"/></svg>
<div style="position:absolute;left:198.0px;top:1169.0px;width:2693.5px;height:74.0px;box-sizing:border-box;border:2px solid #e0dce5;border-radius:12px;box-shadow:inset 0 2px 3px rgba(0,0,0,0.025)"></div>
<svg style="position:absolute;left:232.0px;top:1192.6px;" width="28" height="28" viewBox="0 0 28 28" fill="none"><g stroke="#71637e" stroke-width="3" stroke-linecap="round"><circle cx="11" cy="11" r="9.3"/><path d="M18,18 L26.5,26.5"/></g></svg>
<div id="t54" class="t" style="left:274.50px;top:1193.1px;font-size:28px;line-height:28px;font-weight:400;color:#71637e;letter-spacing:0.766px;">Filter your projects</div>
<div style="position:absolute;left:198.0px;top:1276.0px;width:2693.5px;height:226.0px;box-sizing:border-box;border:2px solid #e0dce5;border-radius:12px"></div>
<div style="position:absolute;left:200.0px;top:1278.0px;width:2689.5px;height:87.0px;box-sizing:border-box;background:#f6f6f9;border-top-left-radius:10px;border-top-right-radius:10px"></div>
<div style="position:absolute;left:200.0px;top:1365.0px;width:2689.5px;height:2.0px;box-sizing:border-box;background:#e0dce5"></div>
<div id="t55" class="t" style="left:231.90px;top:1309.6px;font-size:24px;line-height:24px;font-weight:700;color:#71637e;letter-spacing:0.000px;transform:scaleX(0.9602);transform-origin:left center;">PROJECT</div>
<div id="t56" class="t" style="left:1674.90px;top:1309.6px;font-size:24px;line-height:24px;font-weight:700;color:#71637e;letter-spacing:0.000px;transform:scaleX(0.9242);transform-origin:left center;">TOTAL</div>
<svg style="position:absolute;left:1755.0px;top:1310.0px;" width="21" height="24" viewBox="0 0 21 24" fill="none"><g stroke="#71637e" stroke-width="2.2" stroke-linecap="round" stroke-linejoin="round" fill="none"><path d="M10.5,2 V22"/><path d="M2,13.5 L10.5,22 L19,13.5"/></g></svg>
<div id="t57" class="t" style="right:974.40px;top:1309.6px;font-size:24px;line-height:24px;font-weight:700;color:#71637e;letter-spacing:0.000px;transform:scaleX(0.9504);transform-origin:right center;">ACCEPTED</div>
<div id="t58" class="t" style="right:800.20px;top:1309.6px;font-size:24px;line-height:24px;font-weight:700;color:#71637e;letter-spacing:0.000px;transform:scaleX(0.9509);transform-origin:right center;">FILTERED</div>
<div id="t59" class="t" style="right:578.30px;top:1309.6px;font-size:24px;line-height:24px;font-weight:700;color:#71637e;letter-spacing:0.000px;transform:scaleX(0.9562);transform-origin:right center;">RATE LIMITED</div>
<div id="t60" class="t" style="right:420.20px;top:1309.6px;font-size:24px;line-height:24px;font-weight:700;color:#71637e;letter-spacing:0.000px;transform:scaleX(0.9784);transform-origin:right center;">INVALID</div>
<svg style="position:absolute;left:1637.0px;top:1279.0px;" width="10" height="6" viewBox="0 0 10 6" fill="none"><path d="M0,0 L10,0 L5,6 Z" fill="#fff"/></svg>
<svg style="position:absolute;left:1804.0px;top:1279.0px;" width="10" height="6" viewBox="0 0 10 6" fill="none"><path d="M0,0 L10,0 L5,6 Z" fill="#fff"/></svg>
<svg style="position:absolute;left:1994.0px;top:1279.0px;" width="10" height="6" viewBox="0 0 10 6" fill="none"><path d="M0,0 L10,0 L5,6 Z" fill="#fff"/></svg>
<svg style="position:absolute;left:2169.0px;top:1279.0px;" width="10" height="6" viewBox="0 0 10 6" fill="none"><path d="M0,0 L10,0 L5,6 Z" fill="#fff"/></svg>
<svg style="position:absolute;left:2393.0px;top:1279.0px;" width="10" height="6" viewBox="0 0 10 6" fill="none"><path d="M0,0 L10,0 L5,6 Z" fill="#fff"/></svg>
<svg style="position:absolute;left:2550.0px;top:1279.0px;" width="10" height="6" viewBox="0 0 10 6" fill="none"><path d="M0,0 L10,0 L5,6 Z" fill="#fff"/></svg>
<svg style="position:absolute;left:232.0px;top:1410.0px;" width="32" height="32" viewBox="0 0 32 32" fill="none"><rect width="32" height="32" rx="5.5" fill="#2b1f38"/>
<g stroke="#5ec6d6" stroke-width="1.25" fill="none"><ellipse cx="16" cy="16" rx="13.4" ry="5.1"/><ellipse cx="16" cy="16" rx="13.4" ry="5.1" transform="rotate(60 16 16)"/><ellipse cx="16" cy="16" rx="13.4" ry="5.1" transform="rotate(120 16 16)"/></g><circle cx="16" cy="16" r="2.4" fill="#5ec6d6"/></svg>
<div id="t61" class="t" style="left:276.50px;top:1412.1px;font-size:28px;line-height:28px;font-weight:400;color:#2562d4;letter-spacing:0.800px;">react</div>
<div id="t62" class="t" style="right:1164.80px;top:1411.4px;font-size:28px;line-height:28px;font-weight:400;color:#2b2233;letter-spacing:0.000px;transform:scaleX(1.0377);transform-origin:right center;">1.2M</div>
<div id="t63" class="t" style="right:974.90px;top:1411.4px;font-size:28px;line-height:28px;font-weight:400;color:#2b2233;letter-spacing:0.000px;transform:scaleX(1.0342);transform-origin:right center;">1.2M</div>
<div id="t64" class="t" style="right:800.60px;top:1411.4px;font-size:28px;line-height:28px;font-weight:400;color:#2b2233;letter-spacing:0.000px;transform:scaleX(1.1288);transform-origin:right center;">39</div>
<div id="t65" class="t" style="right:577.30px;top:1411.4px;font-size:28px;line-height:28px;font-weight:400;color:#2b2233;letter-spacing:0.000px;transform:scaleX(1.0335);transform-origin:right center;">0</div>
<div id="t66" class="t" style="right:420.20px;top:1411.4px;font-size:28px;line-height:28px;font-weight:400;color:#2b2233;letter-spacing:0.000px;transform:scaleX(1.0874);transform-origin:right center;">305</div>
<div style="position:absolute;left:2587.5px;top:1400.2px;width:194.0px;height:51.3px;box-sizing:border-box;border:2px solid #e0dce5;border-radius:9px"></div>
<svg style="position:absolute;left:2605.0px;top:1414.0px;" width="24" height="24" viewBox="0 0 24 24" fill="none"><g stroke="#3e3446" stroke-width="2.3" stroke-linejoin="round" fill="none"><rect x="1.1" y="10.1" width="8.6" height="12.8" rx="0.5"/><rect x="14.3" y="1.1" width="8.6" height="21.8" rx="0.5"/></g></svg>
<div id="t67" class="t" style="left:2642.40px;top:1413.7px;font-size:24px;line-height:24px;font-weight:700;color:#3e3446;letter-spacing:0.178px;">View Stats</div>
<div style="position:absolute;left:2798.3px;top:1400.2px;width:58.7px;height:51.3px;box-sizing:border-box;border:2px solid #e0dce5;border-radius:9px"></div>
<svg style="position:absolute;left:2816.0px;top:1414.0px;" width="24" height="24" viewBox="0 0 42 42" fill="none"><g stroke="#3e3446" stroke-width="3.8" stroke-linejoin="round"><path d="M21.00,1.90 L21.74,2.05 L22.46,2.49 L23.11,3.18 L23.69,4.05 L24.18,5.01 L24.60,5.99 L24.98,6.90 L25.34,7.65 L25.72,8.21 L26.17,8.53 L26.71,8.62 L27.37,8.49 L28.16,8.21 L29.06,7.84 L30.06,7.45 L31.09,7.11 L32.11,6.91 L33.06,6.88 L33.87,7.08 L34.51,7.49 L34.92,8.13 L35.12,8.94 L35.09,9.89 L34.89,10.91 L34.55,11.94 L34.16,12.94 L33.79,13.84 L33.51,14.63 L33.38,15.29 L33.47,15.83 L33.79,16.28 L34.35,16.66 L35.10,17.02 L36.01,17.40 L36.99,17.82 L37.95,18.31 L38.82,18.89 L39.51,19.54 L39.95,20.26 L40.10,21.00 L39.95,21.74 L39.51,22.46 L38.82,23.11 L37.95,23.69 L36.99,24.18 L36.01,24.60 L35.10,24.98 L34.35,25.34 L33.79,25.72 L33.47,26.17 L33.38,26.71 L33.51,27.37 L33.79,28.16 L34.16,29.06 L34.55,30.06 L34.89,31.09 L35.09,32.11 L35.12,33.06 L34.92,33.87 L34.51,34.51 L33.87,34.92 L33.06,35.12 L32.11,35.09 L31.09,34.89 L30.06,34.55 L29.06,34.16 L28.16,33.79 L27.37,33.51 L26.71,33.38 L26.17,33.47 L25.72,33.79 L25.34,34.35 L24.98,35.10 L24.60,36.01 L24.18,36.99 L23.69,37.95 L23.11,38.82 L22.46,39.51 L21.74,39.95 L21.00,40.10 L20.26,39.95 L19.54,39.51 L18.89,38.82 L18.31,37.95 L17.82,36.99 L17.40,36.01 L17.02,35.10 L16.66,34.35 L16.28,33.79 L15.83,33.47 L15.29,33.38 L14.63,33.51 L13.84,33.79 L12.94,34.16 L11.94,34.55 L10.91,34.89 L9.89,35.09 L8.94,35.12 L8.13,34.92 L7.49,34.51 L7.08,33.87 L6.88,33.06 L6.91,32.11 L7.11,31.09 L7.45,30.06 L7.84,29.06 L8.21,28.16 L8.49,27.37 L8.62,26.71 L8.53,26.17 L8.21,25.72 L7.65,25.34 L6.90,24.98 L5.99,24.60 L5.01,24.18 L4.05,23.69 L3.18,23.11 L2.49,22.46 L2.05,21.74 L1.90,21.00 L2.05,20.26 L2.49,19.54 L3.18,18.89 L4.05,18.31 L5.01,17.82 L5.99,17.40 L6.90,17.02 L7.65,16.66 L8.21,16.28 L8.53,15.83 L8.62,15.29 L8.49,14.63 L8.21,13.84 L7.84,12.94 L7.45,11.94 L7.11,10.91 L6.91,9.89 L6.88,8.94 L7.08,8.13 L7.49,7.49 L8.13,7.08 L8.94,6.88 L9.89,6.91 L10.91,7.11 L11.94,7.45 L12.94,7.84 L13.84,8.21 L14.63,8.49 L15.29,8.62 L15.83,8.53 L16.28,8.21 L16.66,7.65 L17.02,6.90 L17.40,5.99 L17.82,5.01 L18.31,4.05 L18.89,3.18 L19.54,2.49 L20.26,2.05 Z"/><circle cx="21" cy="21" r="5"/></g></svg>
</body></html>
